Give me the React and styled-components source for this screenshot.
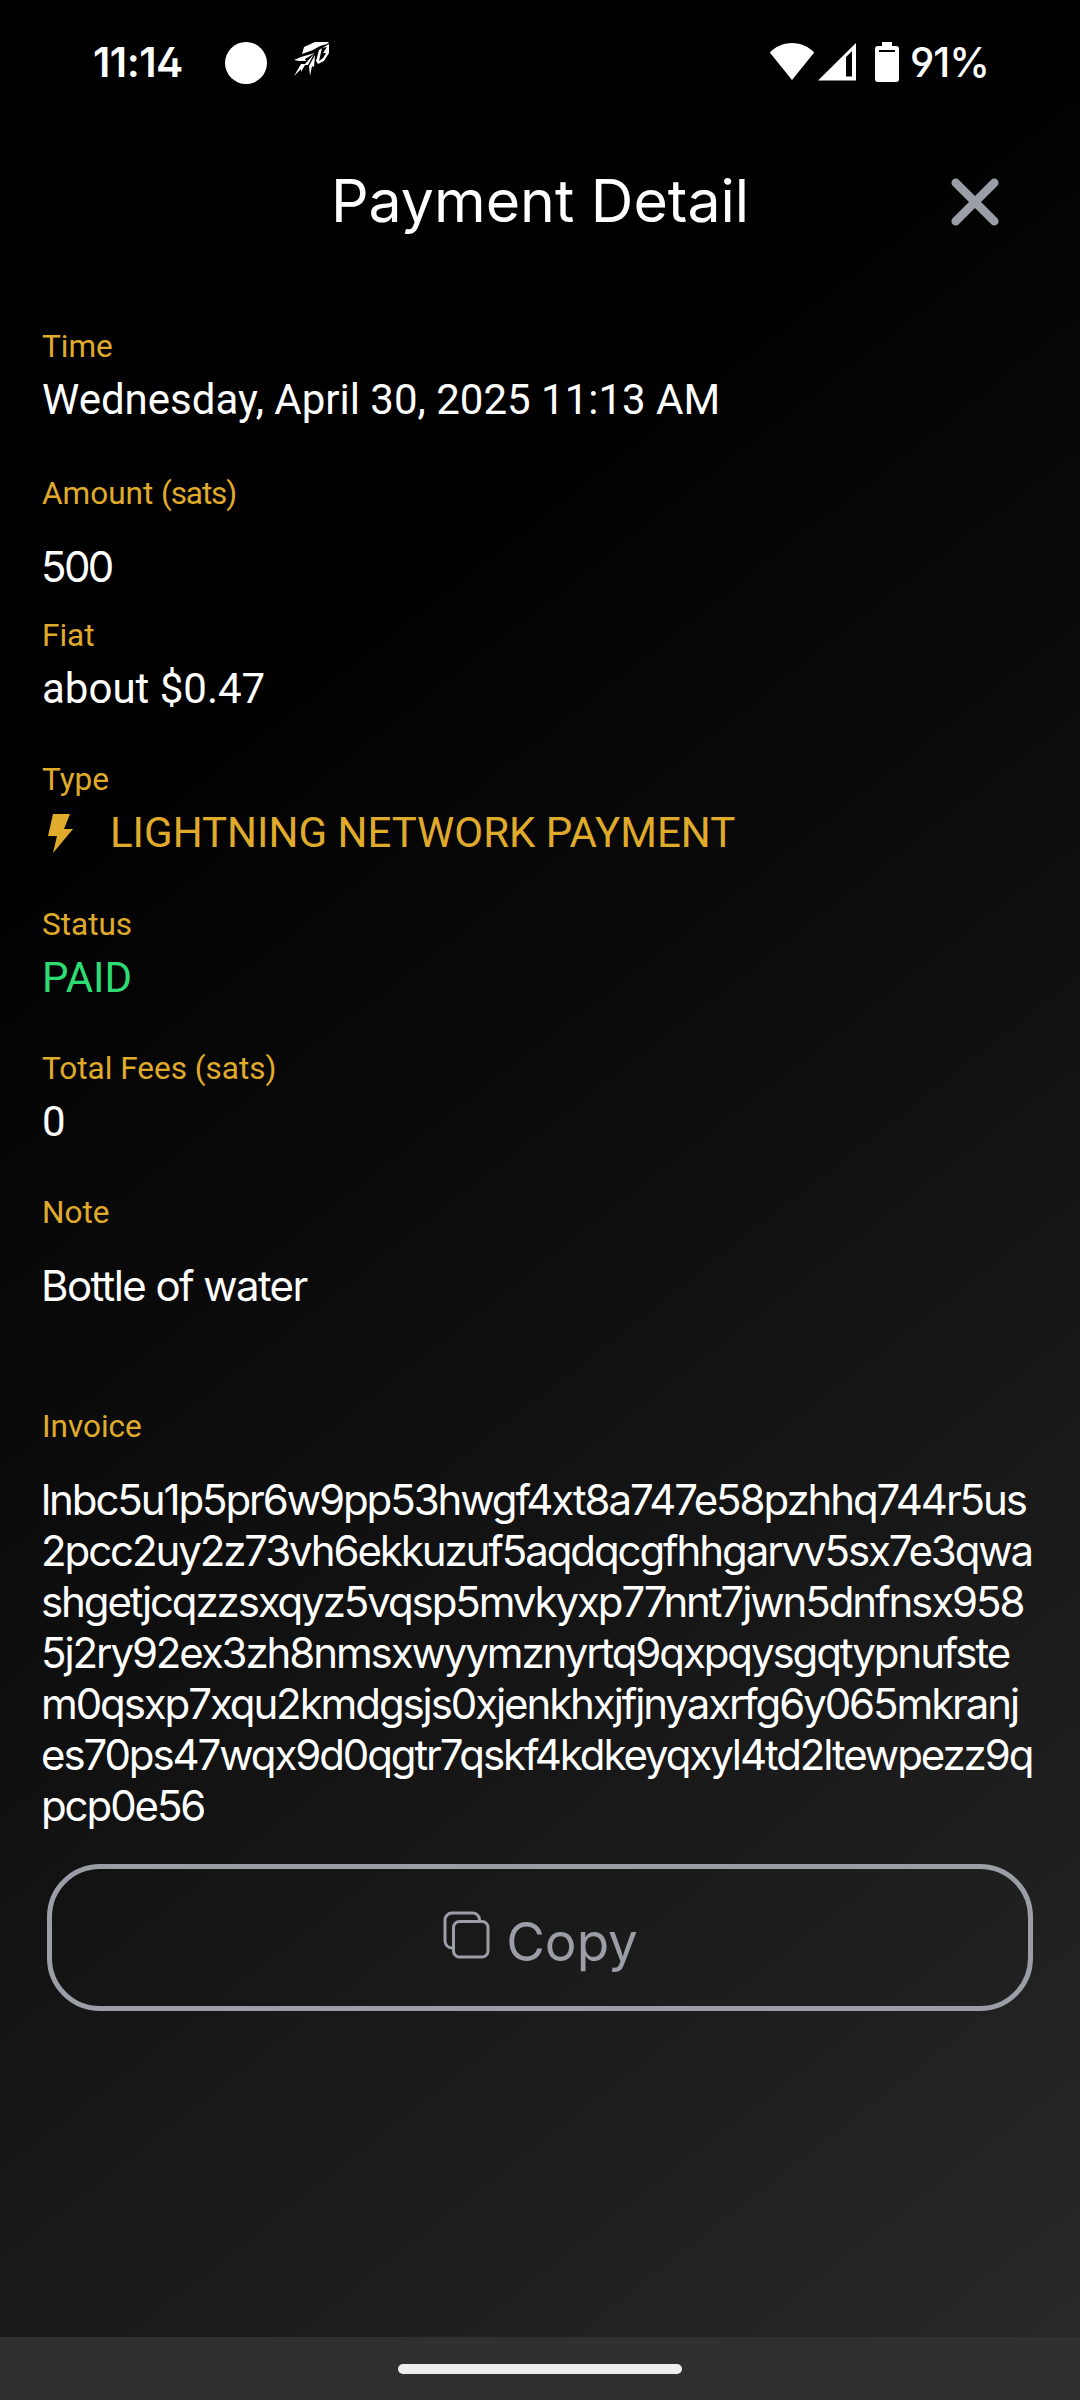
import React from 'react'
import styled, { createGlobalStyle } from 'styled-components'

const GlobalStyle = createGlobalStyle`
    * {
        box-sizing: border-box;
    }
    body {
        margin: 0;
        background: #000;
    }
`

const Screen = styled.div`
    width: 1080px;
    height: 2400px;
    display: flex;
    flex-direction: column;
    overflow: hidden;
    color: #fff;
    font-family: Roboto, sans-serif;
    background: linear-gradient(142deg, #000 26%, #292929 100%);
`

const StatusBar = styled.header`
    height: 126px;
    display: flex;
    align-items: flex-start;
    justify-content: space-between;
    padding: 41px 91px 0 93px;
    font-family: Inter, sans-serif;
    font-size: 41px;
    font-weight: 600;
    line-height: 43px;
    font-feature-settings: 'ss01', 'cv04';
`

const StatusGroup = styled.div`
    display: flex;
    align-items: flex-start;
    svg {
        display: block;
        flex-shrink: 0;
        fill: #fff;
    }
`

const Clock = styled.span`
    width: 132px;
    letter-spacing: -0.5px;
`

const Dot = styled.span`
    width: 42px;
    height: 42px;
    margin: 1px 27px 0 0;
    border-radius: 50%;
    background: #fff;
`

const Indicators = styled(StatusGroup)`
    svg:nth-child(2) {
        margin: 0 19px 0 3px;
    }
`

const Percent = styled.span`
    width: 79px;
    margin-left: 11px;
    font-weight: 500;
    letter-spacing: -1px;
`

const TitleBar = styled.div`
    height: 150px;
    display: grid;
    grid-template-columns: 1fr auto 1fr;
    align-items: center;
`

const Title = styled.h1`
    grid-column: 2;
    margin: 0;
    font-family: Inter, sans-serif;
    font-size: 59px;
    font-weight: 400;
    line-height: 72px;
`

const CloseButton = styled.button`
    grid-column: 3;
    justify-self: end;
    margin-right: 81px;
    padding: 1px 0 0;
    border: 0;
    background: transparent;
    svg {
        display: block;
        stroke: #9b9da7;
        stroke-width: 8.5;
        stroke-linecap: round;
    }
`

const Details = styled.main`
    flex: 1;
    padding: 52px 42px 0;
`

const Field = styled.section`
    display: flex;
    flex-direction: column;
    gap: ${props => props.$gap || 9}px;
    margin-bottom: ${props => props.$after || 47}px;
`

const Label = styled.span`
    color: #e0ab2b;
    font-size: 31.5px;
    line-height: 38px;
    small {
        font-size: inherit;
        letter-spacing: -1.1px;
    }
`

const Value = styled.span`
    display: flex;
    align-items: center;
    color: ${props => props.$color || '#fff'};
    font-size: 42px;
    line-height: 50px;
    svg {
        fill: currentColor;
        margin: 1px 36px 0 6px;
    }
`

const Input = styled.div`
    margin-left: -1px;
    font-family: Inter, sans-serif;
    font-size: 42px;
    line-height: 51px;
    letter-spacing: ${props => props.$tracking}px;
    white-space: nowrap;
`

const CopyButton = styled.button`
    width: 986px;
    height: 147px;
    margin-left: 5px;
    padding: 0 0 0 1px;
    display: flex;
    align-items: center;
    justify-content: center;
    gap: 16px;
    border: 5px solid #9b9da7;
    border-radius: 53px;
    background: transparent;
    color: #9b9da7;
    font-family: Inter, sans-serif;
    font-size: 53px;
    line-height: 64px;
    svg {
        margin-bottom: 6px;
        fill: none;
        stroke: currentColor;
        stroke-width: 3;
    }
    span {
        margin-top: 8px;
    }
`

const NavBar = styled.footer`
    height: 63px;
    display: flex;
    justify-content: center;
    padding-top: 27px;
    background: #303030;
    &::after {
        content: '';
        width: 284px;
        height: 10px;
        border-radius: 5px;
        background: #eee;
    }
`

const invoice = [
    'lnbc5u1p5pr6w9pp53hwgf4xt8a747e58pzhhq744r5us',
    '2pcc2uy2z73vh6ekkuzuf5aqdqcgfhhgarvv5sx7e3qwa',
    'shgetjcqzzsxqyz5vqsp5mvkyxp77nnt7jwn5dnfnsx958',
    '5j2ry92ex3zh8nmsxwyymznyrtq9qxpqysgqtypnufste',
    'm0qsxp7xqu2kmdgsjs0xjenkhxjfjnyaxrfg6y065mkranj',
    'es70ps47wqx9d0qgtr7qskf4kdkeyqxyl4td2ltewpezz9q',
    'pcp0e56',
]

const RocketIcon = () => (
    <svg width='36' height='36' viewBox='0 0 36 36'>
        <path d='M8 13 L10 6 L21 1 H35 L33 3 L26 5 L19 9 Z' />
        <path fillRule='evenodd' d='M35 3 V12 L30 20 L24 23 L22 20 L25 9 Z M33 6 L28 7 L25 20 L29 17 L32 12 L29 12 Z' />
        <path d='M0 19 L7 16 L21 12 L11 18 L12 20 L5 20 Z' />
        <path d='M0 35 L7 23 L11 23 L20 13 L14 24 L11 24 L7 31 L7 28 Z' />
        <path d='M16 35 L15 25 L21 14 L20 26 L18 25 Z' />
    </svg>
)

const WifiIcon = () => (
    <svg width='46' height='40' viewBox='0 0 46 40'>
        <path d='M23 39 L0.8 11.5 C6 6 14 2 23 2 S40 6 45.2 11.5 Z' />
    </svg>
)

const SignalIcon = () => (
    <svg width='38' height='40' viewBox='0 0 38 40'>
        <path fillRule='evenodd' d='M0 39.5 L38 2 V39.5 Z M28 16 L34 10 V35.5 H28 Z' />
    </svg>
)

const BatteryIcon = () => (
    <svg width='24' height='42' viewBox='0 0 24 42'>
        <path fillRule='evenodd' d='M7 1 H17 V5 H21 A3 3 0 0 1 24 8 V38 A3 3 0 0 1 21 41 H3 A3 3 0 0 1 0 38 V8 A3 3 0 0 1 3 5 H7 Z M4 9 V11 H20 V9 Z' />
    </svg>
)

const CloseIcon = () => (
    <svg width='48' height='48' viewBox='0 0 48 48'>
        <path d='M4.7 4.7 L43.3 43.3 M43.3 4.7 L4.7 43.3' />
    </svg>
)

const BoltIcon = () => (
    <svg width='26' height='40' viewBox='0 0 26 40'>
        <path d='M5 0 H22 L16 15 H25 L5 39 L9 22 H0 Z' />
    </svg>
)

const CopyIcon = () => (
    <svg width='47' height='48' viewBox='0 0 47 48'>
        <rect x='10.5' y='10.5' width='34.5' height='35.5' rx='6' />
        <path d='M10.5 37 H9 A7 7 0 0 1 2 30 V9 A7 7 0 0 1 9 2 H29 A7 7 0 0 1 36.5 9 V10.5' />
    </svg>
)

export default function App() {
    return (
        <Screen>
            <GlobalStyle />
            <StatusBar>
                <StatusGroup>
                    <Clock>11:14</Clock>
                    <Dot />
                    <RocketIcon />
                </StatusGroup>
                <Indicators>
                    <WifiIcon />
                    <SignalIcon />
                    <BatteryIcon />
                    <Percent>91%</Percent>
                </Indicators>
            </StatusBar>
            <TitleBar>
                <Title>Payment Detail</Title>
                <CloseButton aria-label='Close'><CloseIcon /></CloseButton>
            </TitleBar>
            <Details>
                <Field $after={50}>
                    <Label>Time</Label>
                    <Value>Wednesday, April 30, 2025 11:13 AM</Value>
                </Field>
                <Field $gap={28} $after={25}>
                    <Label>Amount <small>(sats)</small></Label>
                    <Input $tracking={-2.6}>500</Input>
                </Field>
                <Field>
                    <Label>Fiat</Label>
                    <Value>about $0.47</Value>
                </Field>
                <Field $after={48}>
                    <Label>Type</Label>
                    <Value $color='#e0ab2b'><BoltIcon />LIGHTNING NETWORK PAYMENT</Value>
                </Field>
                <Field>
                    <Label>Status</Label>
                    <Value $color='#2edc74'>PAID</Value>
                </Field>
                <Field>
                    <Label>Total Fees (sats)</Label>
                    <Value>0</Value>
                </Field>
                <Field $gap={28} $after={97}>
                    <Label>Note</Label>
                    <Input $tracking={-1.6}>Bottle of water</Input>
                </Field>
                <Field $gap={28} $after={33}>
                    <Label>Invoice</Label>
                    <Input $tracking={-2.1}>
                        {invoice.map(line => <div key={line}>{line}</div>)}
                    </Input>
                </Field>
                <CopyButton><CopyIcon /><span>Copy</span></CopyButton>
            </Details>
            <NavBar />
        </Screen>
    )
}
